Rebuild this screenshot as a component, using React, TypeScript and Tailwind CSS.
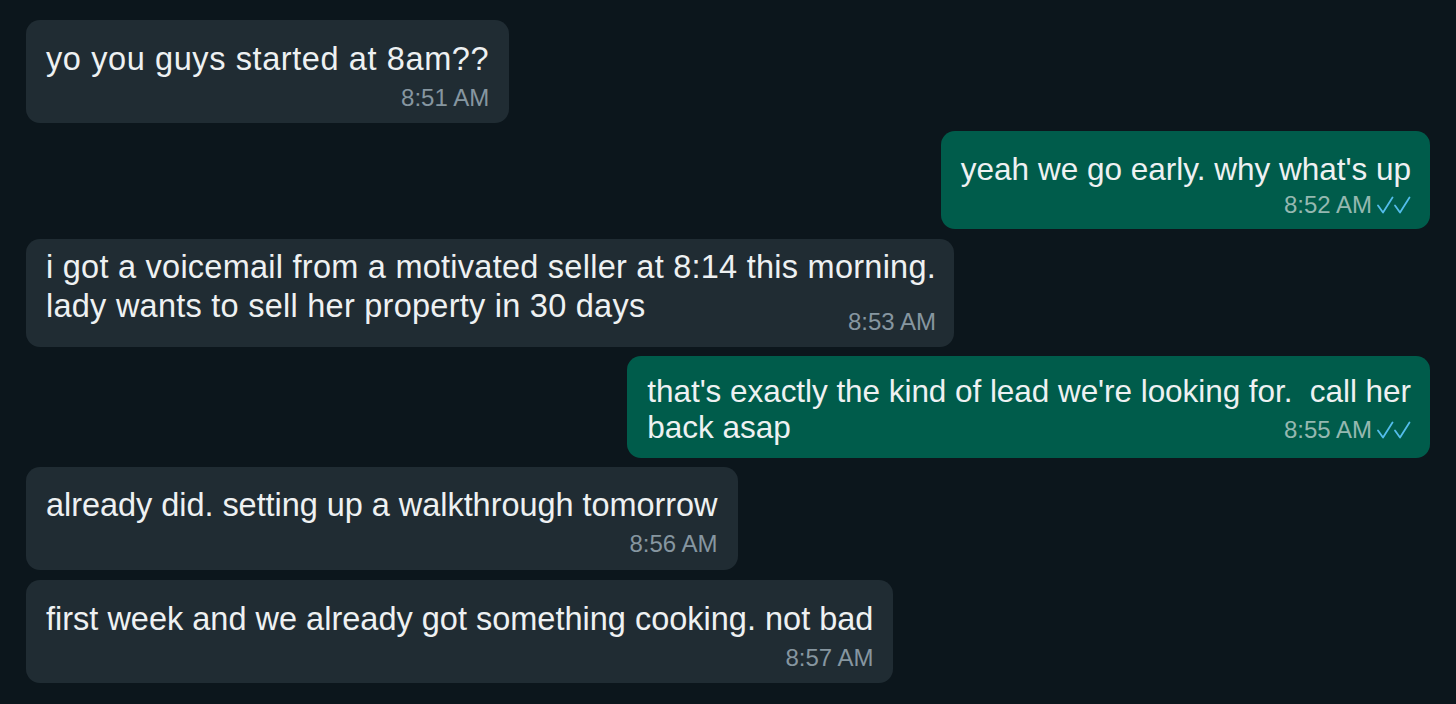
import React from "react";

const FONT = { fontFamily: '"Liberation Sans", Arial, Helvetica, sans-serif' };

function Checks() {
  return (
    <svg width="34" height="18" viewBox="0 0 34 18" fill="none" className="ml-[5px] shrink-0">
      <polyline points="1,9.5 6,16.5 15.5,1.5" stroke="#53bdeb" strokeWidth="1.8" strokeLinecap="round" strokeLinejoin="round" />
      <polyline points="18,9.5 23,16.5 32.5,1.5" stroke="#53bdeb" strokeWidth="1.8" strokeLinecap="round" strokeLinejoin="round" />
    </svg>
  );
}

function Time({ t, out }: { t: string; out?: boolean }) {
  return (
    <div className={`flex items-center text-[24px] leading-[26px] whitespace-nowrap ${out ? "text-[#95b8b0]" : "text-[#8696a0]"}`}>
      <span>{t}</span>
      {out && <Checks />}
    </div>
  );
}

export default function App() {
  return (
    <div style={FONT} className="w-full h-[704px] overflow-hidden bg-[#0c161c] flex flex-col px-[26px] pt-[20px] text-[#eef1f2]">
      {/* 1 */}
      <div className="self-start bg-[#202c33] rounded-[14px] pl-[20px] pr-[20px] pt-[20px] pb-[12px] flex flex-col">
        <div className="text-[32.5px] leading-[38px] tracking-[0.6px] whitespace-nowrap">yo you guys started at 8am??</div>
        <div className="flex justify-end mt-[7px]"><Time t="8:51 AM" /></div>
      </div>

      {/* 2 */}
      <div className="self-end mt-[8px] bg-[#005c4b] rounded-[14px] pl-[20px] pr-[19px] pt-[19px] pb-[11px] flex flex-col">
        <div className="text-[31.5px] leading-[38px] whitespace-nowrap">yeah we go early. why what's up</div>
        <div className="flex justify-end mt-[4px]"><Time t="8:52 AM" out /></div>
      </div>

      {/* 3 */}
      <div className="self-start mt-[10px] bg-[#202c33] rounded-[14px] pl-[20px] pr-[18px] pt-[9px] pb-[12px] flex flex-col">
        <div className="text-[32.5px] leading-[39px] tracking-[0.25px] whitespace-nowrap">i got a voicemail from a motivated seller at 8:14 this morning.</div>
        <div className="flex items-start justify-between">
          <div className="text-[32.5px] leading-[38px] tracking-[0.25px] whitespace-nowrap">lady wants to sell her property in 30 days</div>
          <div className="mt-[22px] ml-[16px]"><Time t="8:53 AM" /></div>
        </div>
      </div>

      {/* 4 */}
      <div className="self-end mt-[9px] bg-[#005c4b] rounded-[14px] pl-[20px] pr-[19px] pt-[17px] pb-[13px] flex flex-col">
        <div className="text-[31.5px] leading-[36px] tracking-[-0.05px] whitespace-pre">that's exactly the kind of lead we're looking for.  call her</div>
        <div className="flex items-end justify-between">
          <div className="text-[31.5px] leading-[36px] whitespace-nowrap">back asap</div>
          <div className="mb-[2px]"><Time t="8:55 AM" out /></div>
        </div>
      </div>

      {/* 5 */}
      <div className="self-start mt-[9px] bg-[#202c33] rounded-[14px] pl-[20px] pr-[20px] pt-[19px] pb-[13px] flex flex-col">
        <div className="text-[32.5px] leading-[38px] tracking-[-0.05px] whitespace-nowrap">already did. setting up a walkthrough tomorrow</div>
        <div className="flex justify-end mt-[7px]"><Time t="8:56 AM" /></div>
      </div>

      {/* 6 */}
      <div className="self-start mt-[10px] bg-[#202c33] rounded-[14px] pl-[20px] pr-[20px] pt-[20px] pb-[12px] flex flex-col">
        <div className="text-[32.5px] leading-[38px] whitespace-nowrap">first week and we already got something cooking. not bad</div>
        <div className="flex justify-end mt-[7px]"><Time t="8:57 AM" /></div>
      </div>
    </div>
  );
}
